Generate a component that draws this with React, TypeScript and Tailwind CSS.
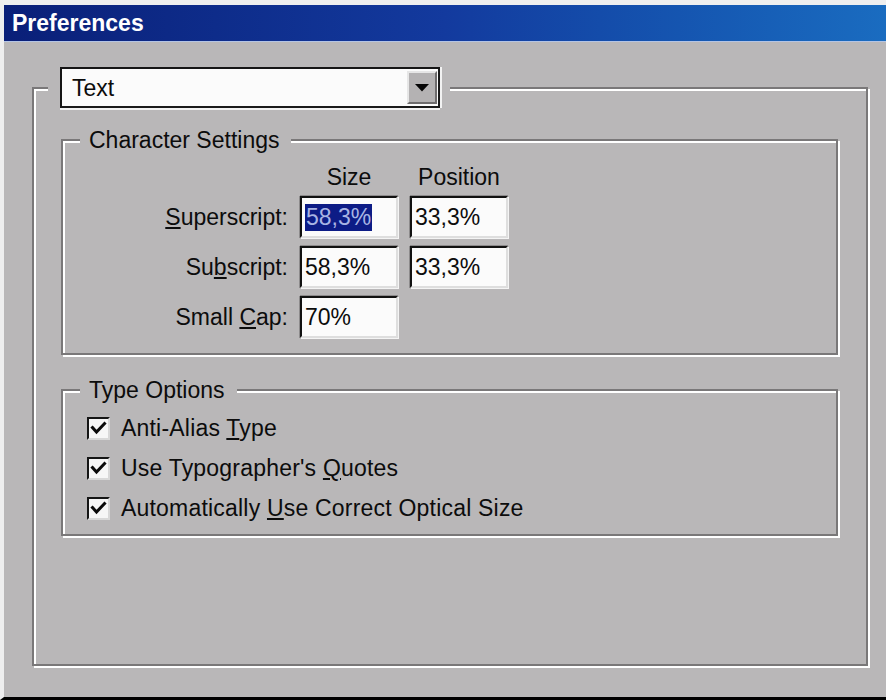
import React from "react";

const BG = "bg-[#b9b7b8]";

function Group({
  label,
  className = "",
  children,
}: {
  label: React.ReactNode;
  className?: string;
  children: React.ReactNode;
}) {
  return (
    <fieldset
      className={`border-2 border-[#7a7879] shadow-[inset_2px_2px_0_#ffffff,2px_2px_0_#ffffff] ${className}`}
    >
      <legend className="ml-[17px] pl-[9px] pr-[12px] bg-[#b9b7b8] text-[23px] leading-[26px]">
        {label}
      </legend>
      {children}
    </fieldset>
  );
}

function Field({ value, selected = false }: { value: string; selected?: boolean }) {
  return (
    <div className="h-[42px] w-[98px] bg-[#fbfbfb] border-t-2 border-l-2 border-t-[#111] border-l-[#111] border-r-2 border-b-2 border-r-[#dedede] border-b-[#dedede] shadow-[0_-1px_0_#8c8a8b,-1px_0_0_#8c8a8b,1px_1px_0_#f4f4f4] flex items-center pl-[3px]">
      {selected ? (
        <span className="bg-[#0d1c86] text-[#a9b4e4] leading-[27px] px-[1px]">{value}</span>
      ) : (
        <span className="leading-[27px]">{value}</span>
      )}
    </div>
  );
}

function Check({ children }: { children: React.ReactNode }) {
  return (
    <div className="flex items-center gap-[11px] h-[30px]">
      <div className="w-[23px] h-[23px] bg-[#f6f6f6] border-t-2 border-l-2 border-t-[#151515] border-l-[#151515] border-r-2 border-b-2 border-r-[#d8d8d8] border-b-[#d8d8d8] flex items-center justify-center">
        <svg width="17" height="17" viewBox="0 0 17 17">
          <polyline
            points="2.5,7.5 6.5,12 14.5,3.5"
            fill="none"
            stroke="#0a0a0a"
            strokeWidth="3"
            strokeLinecap="square"
          />
        </svg>
      </div>
      <span className="text-[23px] leading-[26px] tracking-[0.2px]">{children}</span>
    </div>
  );
}

export default function App() {
  return (
    <div
      className={`w-[886px] h-[700px] ${BG} flex flex-col border-t-[5px] border-t-[#efefef] border-l-[4px] border-l-[#eeeeee] border-b-[3px] border-b-black text-[#0c0c0c] [font-family:'Liberation_Sans',Arial,sans-serif]`}
    >
      {/* title bar */}
      <div className="h-[37px] flex items-center pl-[8px] bg-gradient-to-r from-[#0a1f78] via-[#133a9e] to-[#1a6cc0] border-b border-b-[#b4c4e4]">
        <span className="text-white font-bold text-[23px] leading-none">Preferences</span>
      </div>

      {/* body */}
      <div className="flex-1 flex flex-col pt-[25px] pb-[31px] pl-[28px] pr-[18px]">
        <fieldset className="flex-1 border-2 border-[#7a7879] shadow-[inset_2px_2px_0_#ffffff,2px_2px_0_#ffffff] pt-[19px]">
          <legend className="ml-[14px] pl-[12px] pr-[10px] bg-[#b9b7b8]">
            <div className="w-[380px] h-[41px] bg-[#fbfbfb] border-t-2 border-l-2 border-t-[#151515] border-l-[#151515] border-r-2 border-b-2 border-r-[#1a1a1a] border-b-[#1a1a1a] shadow-[0_2px_0_#f2f2f2,2px_0_0_#f2f2f2] flex items-center justify-between pl-[10px] pr-[1px]">
              <span className="text-[23px] leading-[26px]">Text</span>
              <div className="w-[30px] h-[33px] bg-[#b4b2b3] border-t-2 border-l-2 border-t-[#e6e6e6] border-l-[#e6e6e6] border-r-2 border-b-2 border-r-[#6e6c6d] border-b-[#6e6c6d] flex items-center justify-center">
                <svg width="14" height="8" viewBox="0 0 14 8">
                  <polygon points="0,0 14,0 7,7.5" fill="#050505" />
                </svg>
              </div>
            </div>
          </legend>

          <Group label="Character Settings" className="ml-[27px] mr-[28px] pt-[12px] pb-[15px]">
            <div className="grid grid-cols-[225px_98px_98px] grid-rows-[23px_42px_42px_42px] gap-x-[12px] gap-y-[8px] items-center text-[23px]">
              <div />
              <div className="text-center leading-[26px]">Size</div>
              <div className="text-center leading-[26px]">Position</div>

              <div className="text-right leading-[26px]">
                <u>S</u>uperscript:
              </div>
              <Field value="58,3%" selected />
              <Field value="33,3%" />

              <div className="text-right leading-[26px]">
                Su<u>b</u>script:
              </div>
              <Field value="58,3%" />
              <Field value="33,3%" />

              <div className="text-right leading-[26px]">
                Small <u>C</u>ap:
              </div>
              <Field value="70%" />
              <div />
            </div>
          </Group>

          <Group label="Type Options" className="ml-[27px] mr-[28px] mt-[22px] pt-[10px] pb-[11px]">
            <div className="flex flex-col gap-[10px] pl-[24px]">
              <Check>
                Anti-Alias <u>T</u>ype
              </Check>
              <Check>
                Use Typographer's <u>Q</u>uotes
              </Check>
              <Check>
                Automatically <u>U</u>se Correct Optical Size
              </Check>
            </div>
          </Group>
        </fieldset>
      </div>
    </div>
  );
}
